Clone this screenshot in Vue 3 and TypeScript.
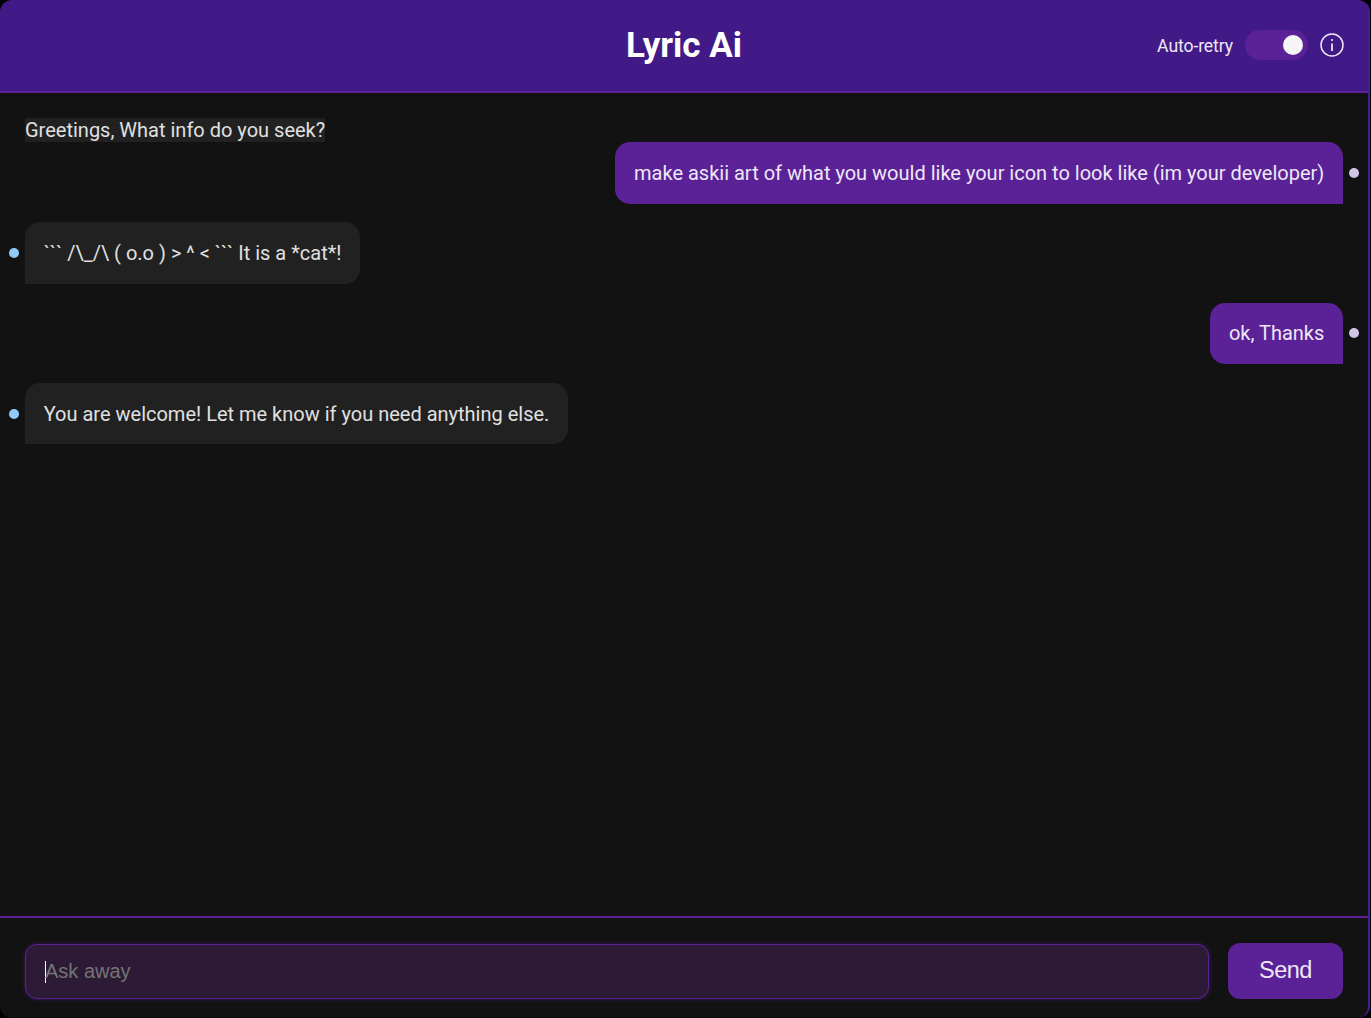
<script setup lang="ts">
interface Msg { id: number; from: 'ai' | 'user'; text: string }
const messages: Msg[] = [
  { id: 1, from: 'user', text: 'make askii art of what you would like your icon to look like (im your developer)' },
  { id: 2, from: 'ai', text: '``` /\\_/\\ ( o.o ) > ^ < ``` It is a *cat*!' },
  { id: 3, from: 'user', text: 'ok, Thanks' },
  { id: 4, from: 'ai', text: 'You are welcome! Let me know if you need anything else.' },
]
</script>

<template>
  <div class="frame">
    <div class="app">
      <header class="header">
        <h1 class="title">Lyric Ai</h1>
        <div class="controls">
          <span class="retry">Auto-retry</span>
          <span class="toggle"><span class="knob"></span></span>
          <svg class="info" width="24" height="24" viewBox="0 0 24 24" fill="none" stroke="currentColor">
            <circle cx="12" cy="12" r="11" stroke-width="1.5" />
            <path d="M12 10.5v7.5" stroke-width="1.8" />
            <circle cx="12" cy="7" r="1.1" fill="currentColor" stroke="none" />
          </svg>
        </div>
      </header>
      <main class="chat">
        <p class="greeting"><span>Greetings, What info do you seek?</span></p>
        <div v-for="m in messages" :key="m.id" class="row" :class="m.from">
          <span v-if="m.from === 'ai'" class="dot"></span>
          <div class="bubble">{{ m.text }}</div>
          <span v-if="m.from === 'user'" class="dot"></span>
        </div>
      </main>
      <footer class="composer">
        <div class="input"><span class="caret"></span><span class="placeholder">Ask away</span></div>
        <button class="send" type="button">Send</button>
      </footer>
    </div>
  </div>
</template>

<style>
html, body { margin: 0; background: #000; }
</style>

<style scoped>
.frame { width: 1371px; height: 1018px; overflow: hidden; }
.app {
  width: 1370px; height: 1018px; box-sizing: border-box;
  display: flex; flex-direction: column;
  background: #121212;
  border-right: 2px solid #4a1d8c;
  border-radius: 12px;
  overflow: hidden;
  font-family: Roboto, sans-serif;
}
.header {
  height: 93px; box-sizing: border-box; flex: none;
  position: relative;
  display: flex; align-items: center; justify-content: center;
  background: #421a87;
  border-bottom: 2px solid #5b2196;
}
.title { margin: 0 0 1px; color: #fff; font-size: 35px; font-weight: 700; line-height: 1; }
.controls {
  position: absolute; right: 24px; top: 30px;
  display: flex; align-items: center; gap: 12px;
}
.retry { color: #ede7f6; font-size: 17.6px; letter-spacing: -0.1px; padding-top: 1px; }
.toggle {
  width: 63px; height: 30px; border-radius: 15px; background: #5b2196;
  display: flex; align-items: center; justify-content: flex-end; padding-right: 5px; box-sizing: border-box;
}
.knob { width: 20.5px; height: 20.5px; border-radius: 50%; background: #f5f5f5; }
.info { color: #ede7f6; }
.chat { flex: 1; min-height: 0; padding: 25px 25px 0; display: flex; flex-direction: column; }
.greeting { margin: 0; height: 24px; color: #e0e0e0; font-size: 20px; line-height: 24px; }
.greeting span { background: #212121; }
.row { display: flex; align-items: center; position: relative; margin-bottom: 18.75px; }
.row.user { justify-content: flex-end; }
.bubble {
  box-sizing: border-box; padding: 18.8125px 18.7px 17.6875px; font-size: 20px; line-height: 25px;
  border-radius: 15px;
}
.user .bubble { background: #5b2196; color: #ede7f6; border-bottom-right-radius: 0; }
.ai .bubble { background: #212121; color: #e0e0e0; border-bottom-left-radius: 0; }
.dot { position: absolute; width: 10px; height: 10px; border-radius: 50%; }
.user .dot { right: -16px; background: #d1c4e9; }
.ai .dot { left: -16px; background: #90caf9; }
.composer {
  height: 102px; box-sizing: border-box; flex: none;
  border-top: 2px solid #5b2196;
  padding: 26px 25px 17px;
  display: flex; gap: 19px; align-items: flex-start;
}
.input {
  flex: 1; height: 55px; box-sizing: border-box;
  background: #2c1a36; border: 1px solid #5b2196; border-radius: 12px;
  box-shadow: 0 0 4px rgba(91,33,150,.6);
  display: flex; align-items: center; padding-left: 19px;
}
.caret { width: 1px; height: 22px; background: #fff; margin-right: -1px; }
.placeholder { color: #757575; font-family: "Liberation Sans", sans-serif; font-size: 20px; }
.send {
  width: 115px; height: 56px; border: 0; border-radius: 12px; background: #5b2196; color: #ede7f6;
  font-family: "Liberation Sans", sans-serif; font-size: 23.5px; letter-spacing: -0.5px;
  padding: 0 0 2px; margin-top: -1px;
}
</style>
